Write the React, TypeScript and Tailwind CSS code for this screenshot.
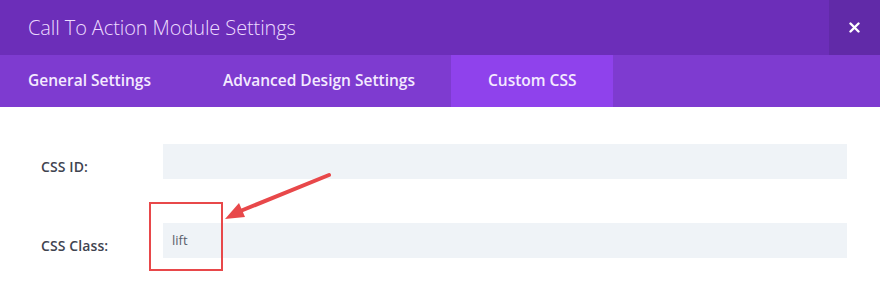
import React from "react";

export default function App() {
  return (
    <div className="w-[880px] h-[293px] bg-white overflow-hidden relative" style={{ fontFamily: '"Open Sans", sans-serif' }}>
      <div className="h-[55px] bg-[#6c2eb9] flex items-center">
        <div className="flex-1 pl-[28px] text-[20px] font-light text-[#ecdcff] tracking-[-0.1px]">Call To Action Module Settings</div>
        <div className="w-[51px] h-full bg-[#612aa8] flex items-center justify-center">
          <svg width="11" height="11" viewBox="0 0 11 11">
            <path d="M1.5 1.5 L9.5 9.5 M9.5 1.5 L1.5 9.5" stroke="#fff" strokeWidth="2.4" strokeLinecap="round" />
          </svg>
        </div>
      </div>
      <div className="h-[52px] bg-[#7e3bd0] flex text-[15.5px] font-semibold text-[#f4eaff]">
        <div className="pl-[28px] pr-[36px] flex items-center">General Settings</div>
        <div className="px-[36px] flex items-center">Advanced Design Settings</div>
        <div className="px-[37px] flex items-center bg-[#8f42ec]">Custom CSS</div>
      </div>
      <div className="pl-[41px] pr-[33px] pt-[37px] flex flex-col gap-[44px]">
        <div className="flex items-center">
          <div className="w-[122px] text-[14px] font-semibold tracking-[0.1px] text-[#3f4450] pt-[10px]">CSS ID:</div>
          <div className="flex-1 h-[35px] bg-[#eff3f7]" />
        </div>
        <div className="flex items-center">
          <div className="w-[122px] text-[14px] font-semibold tracking-[0.1px] text-[#3f4450] pt-[10px]">CSS Class:</div>
          <div className="flex-1 h-[35px] bg-[#eff3f7] flex items-center pl-[9px] text-[13px] text-[#5a606b]">lift</div>
        </div>
      </div>
      <div className="absolute left-[149px] top-[202px] w-[74px] h-[69px] border-2 border-[#e8484a]" />
      <svg className="absolute left-0 top-0" width="880" height="293" viewBox="0 0 880 293">
        <path d="M329 175 L238 212" stroke="#e8484a" strokeWidth="4" strokeLinecap="round" />
        <path d="M225 219 L239 203 L245 217 Z" fill="#e8484a" />
      </svg>
    </div>
  );
}
